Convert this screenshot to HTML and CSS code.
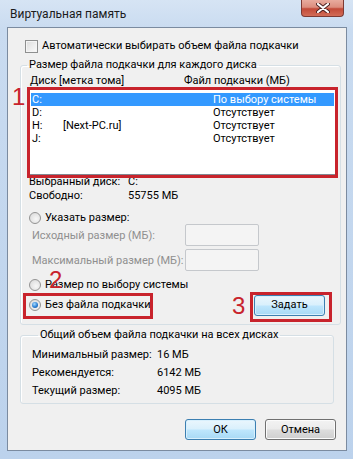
FILE: index.html
```html
<!DOCTYPE html>
<html lang="ru">
<head>
<meta charset="utf-8">
<title>Виртуальная память</title>
<link rel="stylesheet" href="styles.css">
</head>
<body>
<div class="window">
  <div class="titlebar">
    <span class="title">Виртуальная память</span>
    <div class="close"><svg width="14" height="10" viewBox="0 0 14 10"><path d="M2 1 L12 9 M12 1 L2 9" stroke="#4a2020" stroke-width="4" stroke-linecap="round"/><path d="M2 1 L12 9 M12 1 L2 9" stroke="#fff" stroke-width="2.2" stroke-linecap="round"/></svg></div>
  </div>
  <div class="client">
    <div class="checkrow"><span class="checkbox"></span><span>Автоматически выбирать объем файла подкачки</span></div>

    <fieldset class="group group1">
      <legend>Размер файла подкачки для каждого диска</legend>
      <div class="listhead"><span class="c1">Диск [метка тома]</span><span class="c3h">Файл подкачки (МБ)</span></div>
      <div class="listbox">
        <div class="row sel"><span class="c1">C:</span><span class="c2"></span><span class="c3">По выбору системы</span></div>
        <div class="row"><span class="c1">D:</span><span class="c2"></span><span class="c3">Отсутствует</span></div>
        <div class="row"><span class="c1">H:</span><span class="c2">[Next-PC.ru]</span><span class="c3">Отсутствует</span></div>
        <div class="row"><span class="c1">J:</span><span class="c2"></span><span class="c3">Отсутствует</span></div>
      </div>
      <div class="info"><span class="ik">Выбранный диск:</span><span>C:</span></div>
      <div class="info"><span class="ik">Свободно:</span><span>55755 МБ</span></div>
      <div class="radiorow r1"><span class="radio"></span><span>Указать размер:</span></div>
      <div class="inrow first"><span class="dis">Исходный размер (МБ):</span><span class="input"></span></div>
      <div class="inrow"><span class="dis">Максимальный размер (МБ):</span><span class="input"></span></div>
      <div class="radiorow r2"><span class="radio"></span><span>Размер по выбору системы</span></div>
      <div class="radiorow r3"><span class="radio on"><span class="dot"></span></span><span>Без файла подкачки</span><span class="btn blue set">Задать</span></div>
    </fieldset>

    <fieldset class="group group2">
      <legend>Общий объем файла подкачки на всех дисках</legend>
      <div class="tot"><span class="tk">Минимальный размер:</span><span>16 МБ</span></div>
      <div class="tot"><span class="tk">Рекомендуется:</span><span>6142 МБ</span></div>
      <div class="tot"><span class="tk">Текущий размер:</span><span>4095 МБ</span></div>
    </fieldset>

    <div class="buttons"><span class="btn blue">ОК</span><span class="btn">Отмена</span></div>
  </div>

  <div class="mark rect1"></div>
  <div class="mark rect2"></div>
  <div class="mark rect3"></div>
  <span class="num n1">1</span>
  <span class="num n2">2</span>
  <span class="num n3">3</span>
</div>
</body>
</html>
```
FILE: styles.css
```css
html, body {
  margin: 0;
  padding: 0;
  overflow: hidden;
  background: #bfd4ec;
}
.window {
  position: relative;
  width: 353px;
  height: 459px;
  box-sizing: border-box;
  background: linear-gradient(180deg, #d6e4f4 0%, #c9dbf0 30px, #bcd2ec 100%);
  font-family: Roboto, "Noto Sans", sans-serif;
  font-size: 11px;
  color: #000;
  display: flex;
  flex-direction: column;
}
.titlebar {
  height: 27px;
  display: flex;
  align-items: flex-start;
  justify-content: space-between;
  flex: none;
}
.title {
  margin: 6px 0 0 10px;
  font-size: 12px;
  line-height: 16px;
  color: #1b1b1b;
}
.close {
  width: 43px;
  height: 17px;
  margin-right: 9px;
  box-sizing: border-box;
  border: 1px solid #7d3a33;
  border-top: none;
  border-radius: 0 0 4px 4px;
  background: linear-gradient(180deg, #e8ab9e 0%, #dc8e7e 45%, #c24a38 55%, #d26c57 100%);
  display: flex;
  align-items: center;
  justify-content: center;
}
.client {
  flex: none;
  height: 424px;
  margin: 0 6px 0 7px;
  box-sizing: border-box;
  border: 1px solid #7b8ba0;
  background: #f0f0f0;
  display: flex;
  flex-direction: column;
}
.checkrow {
  margin: 11px 0 0 17px;
  height: 14px;
  display: flex;
  align-items: center;
  gap: 4px;
  line-height: 14px;
}
.checkbox {
  width: 13px;
  height: 13px;
  box-sizing: border-box;
  border: 1px solid #8e8f8f;
  background: linear-gradient(135deg, #dcdcdc, #fbfbfb);
  box-shadow: inset 0 0 0 1px #f4f4f4;
}
.group {
  margin: 5px 0 0 12px;
  padding: 0;
  border: 1px solid #d5dfe5;
  border-radius: 3px;
  box-shadow: inset 1px 1px 0 #fff;
  min-width: 0;
}
.group legend {
  margin-left: 6px;
  padding: 0 2px;
  line-height: 14px;
  font-size: 11px;
}
.group1 {
  width: 321px;
  box-sizing: border-box;
  padding-bottom: 8px;
}
.listhead {
  margin: 2px 0 0 8px;
  height: 14px;
  line-height: 14px;
  display: flex;
}
.listhead .c1 { width: 154px; padding-left: 1px; }
.listbox {
  margin: 0 0 0 8px;
  width: 307px;
  height: 87px;
  box-sizing: border-box;
  border: 1px solid #828790;
  background: #fff;
  padding-top: 4px;
}
.row {
  height: 13px;
  line-height: 13px;
  margin: 0 1px;
  display: flex;
  padding-left: 1px;
}
.row.sel { background: #3399ff; color: #fff; }
.row .c1 { width: 31px; }
.row .c2 { width: 150px; }
.info {
  margin-left: 8px;
  height: 14px;
  line-height: 14px;
  display: flex;
}
.ik { width: 99px; }
.radiorow {
  margin-left: 8px;
  display: flex;
  align-items: center;
  gap: 2px;
  line-height: 14px;
}
.radiorow.r1 { margin-top: 8px; height: 13px; }
.radiorow.r2 { margin-top: 7px; height: 14px; }
.radiorow.r3 { margin-top: 2px; height: 22px; }
.radio {
  width: 12px;
  height: 12px;
  box-sizing: border-box;
  border-radius: 50%;
  border: 1px solid #939393;
  background: radial-gradient(circle at 60% 60%, #f7f7f7 0%, #d6d6d6 100%);
  display: flex;
  align-items: center;
  justify-content: center;
  margin-right: 2px;
}
.radio.on .dot {
  width: 6px;
  height: 6px;
  border-radius: 50%;
  background: radial-gradient(circle at 40% 35%, #a8dcff 0%, #2a7fd4 55%, #16498a 100%);
}
.inrow {
  margin: 3px 0 0 11px;
  height: 22px;
  display: flex;
  align-items: center;
}
.inrow.first { margin-top: 0; }
.dis { width: 153px; color: #8f8f8f; white-space: nowrap; }
.input {
  width: 74px;
  height: 22px;
  box-sizing: border-box;
  border: 1px solid #c5c8cc;
  border-radius: 2px;
  background: #f4f4f4;
}
.btn {
  width: 71px;
  height: 21px;
  box-sizing: border-box;
  border: 1px solid #707070;
  border-radius: 3px;
  background: linear-gradient(180deg, #f3f3f3 0%, #ebebeb 48%, #dddddd 52%, #cfcfcf 100%);
  box-shadow: inset 0 0 0 1px #fbfbfb;
  display: flex;
  align-items: center;
  justify-content: center;
  line-height: 14px;
}
.btn.blue {
  border-color: #3c7fb1;
  background: linear-gradient(180deg, #eaf6fd 0%, #d9f0fc 48%, #bee6fd 52%, #a7d9f5 100%);
  box-shadow: inset 0 0 0 1px #d8f0fd;
}
.btn.set { margin-left: auto; margin-right: 15px; }
.group2 {
  width: 314px;
  box-sizing: border-box;
  margin-top: 3px;
  padding: 4px 0 3px 11px;
}
.tot {
  height: 18px;
  line-height: 18px;
  display: flex;
}
.tk { width: 125px; white-space: nowrap; }
.buttons {
  margin: 15px 10px 0 0;
  display: flex;
  justify-content: flex-end;
  gap: 9px;
}
.mark {
  position: absolute;
  box-sizing: border-box;
  border: 3px solid #c8232c;
}
.rect1 { left: 27px; top: 87px; width: 311px; height: 91px; }
.rect2 { left: 23px; top: 293px; width: 130px; height: 26px; }
.rect3 { left: 250px; top: 292px; width: 82px; height: 30px; }
.num {
  position: absolute;
  font-family: "Liberation Sans", Arial, sans-serif;
  font-size: 24px;
  line-height: 24px;
  color: #c8232c;
}
.n1 { left: 12px; top: 85px; }
.n2 { left: 49px; top: 268px; }
.n3 { left: 232px; top: 294px; }
```
